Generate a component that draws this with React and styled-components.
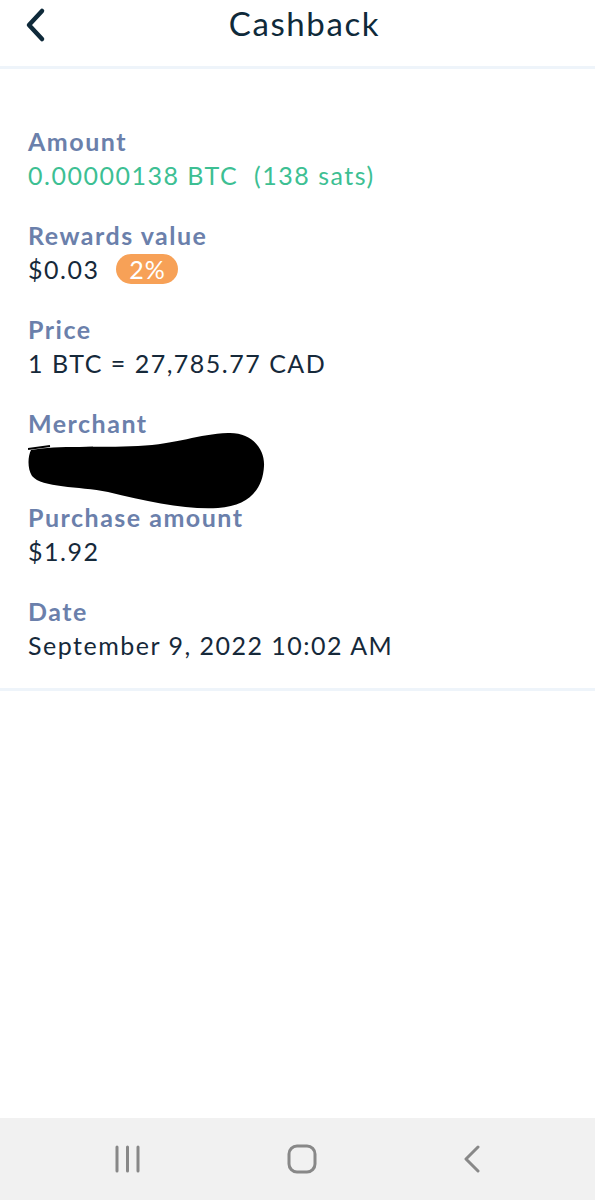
import React from 'react';
import styled, { createGlobalStyle } from 'styled-components';

const GlobalStyle = createGlobalStyle`
  * { box-sizing: border-box; }
  body {
    margin: 0;
    background: #ffffff;
    font-family: Lato, "Noto Sans", sans-serif;
  }
`;

const Page = styled.div`
  display: flex;
  flex-direction: column;
  width: 595px;
  min-height: 1200px;
  background: #ffffff;
`;

const Header = styled.header`
  position: relative;
  display: flex;
  align-items: center;
  justify-content: center;
  height: 69px;
  padding-bottom: 20px;
  border-bottom: 3px solid #eef4fa;
`;

const BackButton = styled.button`
  position: absolute;
  left: 22px;
  top: 6px;
  display: flex;
  padding: 0;
  border: 0;
  background: none;
`;

const Title = styled.h1`
  margin: 0;
  margin-left: 14px;
  font-size: 33px;
  font-weight: 400;
  color: #0f2a3a;
  letter-spacing: 1.6px;
`;

const Details = styled.section`
  display: flex;
  flex-direction: column;
  gap: 28px;
  padding: 57px 28px 26px;
  border-bottom: 3px solid #eef4fa;
`;

const Field = styled.div`
  display: flex;
  flex-direction: column;
`;

const Label = styled.div`
  font-size: 25px;
  line-height: 31px;
  font-weight: 700;
  color: #6b80ab;
  letter-spacing: 1.5px;
`;

const Value = styled.div`
  display: flex;
  align-items: center;
  height: 35px;
  font-size: 25px;
  font-weight: 400;
  color: ${p => (p.$accent ? '#3dbf93' : '#16293a')};
  letter-spacing: 1.5px;
  white-space: pre;
`;

const Badge = styled.span`
  display: inline-flex;
  align-items: center;
  justify-content: center;
  width: 62px;
  height: 30px;
  margin-left: 17px;
  border-radius: 15px;
  background: #f7a157;
  color: #ffffff;
  font-size: 25px;
  letter-spacing: 1px;
`;

const Spacer = styled.div`
  flex: 1;
`;

const NavBar = styled.nav`
  display: flex;
  align-items: center;
  justify-content: center;
  gap: 146px;
  height: 82px;
  background: #f1f1f1;
`;

const fields = [
  { label: 'Amount', value: '0.00000138 BTC  (138 sats)', accent: true },
  { label: 'Rewards value', value: '$0.03', badge: '2%' },
  { label: 'Price', value: '1 BTC = 27,785.77 CAD' },
  { label: 'Merchant', redacted: true },
  { label: 'Purchase amount', value: '$1.92' },
  { label: 'Date', value: 'September 9, 2022 10:02 AM' },
];

// hand-drawn redaction over the merchant name
const Scribble = () => (
  <svg width="240" height="78" viewBox="0 0 240 78" style={{ marginTop: -7, marginBottom: -36 }}>
    <path
      d="M3 18 C30 13 70 16 110 14 C150 12 170 2 200 1 C225 0 237 18 236 34 C235 56 222 74 190 76 C160 78 120 70 80 60 C50 54 14 56 4 44 C-1 36 0 24 3 18 Z"
      fill="#000"
    />
    <path d="M0 17 L22 14" stroke="#000" strokeWidth="2" />
  </svg>
);

const App = () => (
  <Page>
    <GlobalStyle />
    <Header>
      <BackButton aria-label="Back">
        <svg width="28" height="40" viewBox="0 0 28 40">
          <path d="M20 5 L7 19 L20 33" fill="none" stroke="#0f2a3a" strokeWidth="4.5" strokeLinecap="round" strokeLinejoin="round" />
        </svg>
      </BackButton>
      <Title>Cashback</Title>
    </Header>
    <Details>
      {fields.map(f => (
        <Field key={f.label}>
          <Label>{f.label}</Label>
          {f.redacted ? (
            <Scribble />
          ) : (
            <Value $accent={f.accent}>
              {f.value}
              {f.badge && <Badge>{f.badge}</Badge>}
            </Value>
          )}
        </Field>
      ))}
    </Details>
    <Spacer />
    <NavBar>
      <svg width="26" height="28" viewBox="0 0 26 28">
        <g stroke="#888" strokeWidth="3" strokeLinecap="round">
          <line x1="2" y1="2" x2="2" y2="26" />
          <line x1="12.5" y1="2" x2="12.5" y2="26" />
          <line x1="23" y1="2" x2="23" y2="26" />
        </g>
      </svg>
      <svg width="30" height="30" viewBox="0 0 30 30">
        <rect x="2" y="2" width="26" height="26" rx="8" fill="none" stroke="#888" strokeWidth="3" />
      </svg>
      <svg width="18" height="28" viewBox="0 0 18 28">
        <path d="M15 2 L3 14 L15 26" fill="none" stroke="#888" strokeWidth="3" strokeLinecap="round" strokeLinejoin="round" />
      </svg>
    </NavBar>
  </Page>
);

export default App;
